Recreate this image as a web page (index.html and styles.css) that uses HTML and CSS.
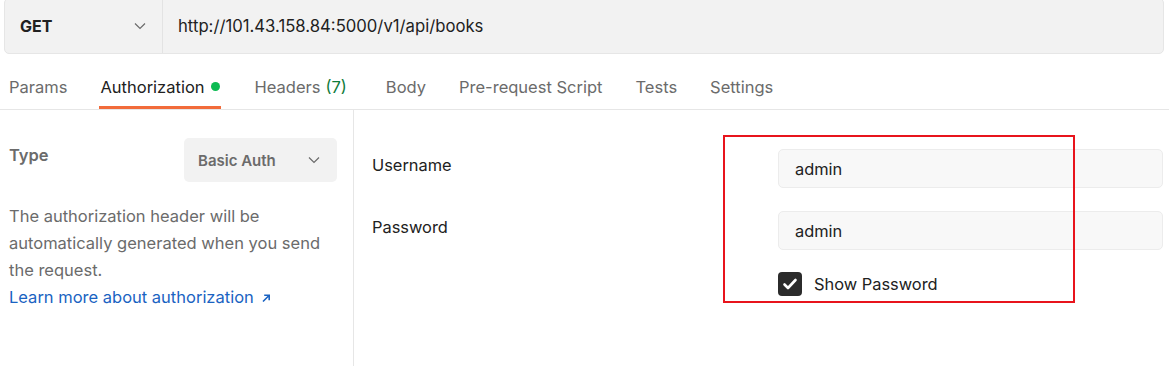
FILE: index.html
```html
<!DOCTYPE html>
<html>
<head>
<meta charset="utf-8">
<link rel="stylesheet" href="styles.css">
</head>
<body>
<div class="page">
  <div class="urlbar">
    <div class="method">
      <span class="method-name">GET</span>
      <svg class="chev" width="12" height="8" viewBox="0 0 12 8"><path d="M1 1.5 L6 6.5 L11 1.5" fill="none" stroke="#6b6b6b" stroke-width="1.2"/></svg>
    </div>
    <div class="url">http://101.43.158.84:5000/v1/api/books</div>
  </div>

  <div class="tabs">
    <div class="tab">Params</div>
    <div class="tab active">Authorization <span class="dot"></span></div>
    <div class="tab wide">Headers <span class="count">(7)</span></div>
    <div class="tab">Body</div>
    <div class="tab">Pre-request Script</div>
    <div class="tab">Tests</div>
    <div class="tab">Settings</div>
  </div>

  <div class="content">
    <div class="left">
      <div class="type-row">
        <span class="type-label">Type</span>
        <div class="select">
          <span>Basic Auth</span>
          <svg class="chev" width="12" height="8" viewBox="0 0 12 8"><path d="M1 1.5 L6 6.5 L11 1.5" fill="none" stroke="#6b6b6b" stroke-width="1.2"/></svg>
        </div>
      </div>
      <p class="desc">The authorization header will be automatically generated when you send the request.<br><a class="learn" href="#">Learn more about authorization <svg class="arrow" width="10" height="10" viewBox="0 0 10 10"><path d="M2 8.5 L8 2.5 M3.2 2.3 H8.2 V7.3" fill="none" stroke="#1a63c2" stroke-width="1.6"/></svg></a></p>
    </div>
    <div class="right">
      <div class="field">
        <span class="label">Username</span>
        <div class="input">admin</div>
      </div>
      <div class="field">
        <span class="label">Password</span>
        <div class="input">admin</div>
      </div>
      <div class="check-row">
        <span class="checkbox"><svg width="16" height="14" viewBox="0 0 16 14"><path d="M2.5 7.5 L6 11 L13.5 3" fill="none" stroke="#fff" stroke-width="2.6" stroke-linecap="round" stroke-linejoin="round"/></svg></span>
        <span class="check-label">Show Password</span>
      </div>
      <div class="highlight"></div>
    </div>
  </div>
</div>
</body>
</html>
```

FILE: styles.css
```css
* { box-sizing: border-box; }
html, body { margin: 0; padding: 0; background: #fff; }
body {
  font-family: Inter, "Noto Sans", "Liberation Sans", sans-serif;
  font-size: 16px;
  color: #212121;
  width: 1169px;
  height: 366px;
  overflow: hidden;
}
.page { position: relative; }

.urlbar {
  display: flex;
  margin: -2px 5px 0 4px;
  height: 56px;
  background: #f2f2f2;
  border: 1px solid #e6e6e6;
  border-radius: 5px;
}
.method {
  width: 158px;
  display: flex;
  align-items: center;
  justify-content: space-between;
  padding: 0 16px 0 15px;
  border-right: 1px solid #e3e3e3;
}
.method-name { font-weight: 700; font-size: 16px; color: #212121; }
.url { display: flex; align-items: center; padding-left: 15px; font-size: 16.7px; color: #212121; }

.tabs {
  display: flex;
  height: 56px;
  border-bottom: 1px solid #e6e6e6;
  padding-left: 9px;
}
.tab {
  display: flex;
  align-items: center;
  margin-right: 33px;
  font-size: 16.5px;
  color: #6b6b6b;
  position: relative;
  padding-top: 10px;
}
.tab.active { color: #212121; margin-right: 35px; }
.tab.wide { margin-right: 39px; }
.tab.active::after {
  content: "";
  position: absolute;
  left: -1px; right: -1px; bottom: 0;
  height: 3px;
  background: #f26b3a;
}
.dot { width: 9px; height: 9px; border-radius: 50%; background: #0cbb52; margin-left: 6px; }
.count { color: #0f7b3a; margin-left: 5px; }

.content { display: flex; height: 256px; }
.left {
  width: 354px;
  border-right: 1px solid #e6e6e6;
  padding: 28px 16px 0 9px;
}
.type-row { display: flex; justify-content: space-between; align-items: flex-start; }
.type-label { font-weight: 600; color: #6b6b6b; font-size: 16.5px; padding-top: 7px; }
.select {
  width: 153px;
  height: 44px;
  background: #f2f2f2;
  border-radius: 5px;
  display: flex;
  align-items: center;
  justify-content: space-between;
  padding: 0 17px 0 14px;
  font-weight: 600;
  font-size: 15px;
  color: #6b6b6b;
}
.desc {
  margin: 21px 0 0 0;
  line-height: 27px;
  color: #6b6b6b;
  font-size: 16.5px;
}
.learn { color: #1a63c2; text-decoration: none; }
.arrow { margin-left: 3px; vertical-align: 0; }

.right { flex: 1; position: relative; padding: 39px 6px 0 18px; }
.field { display: flex; align-items: flex-start; justify-content: space-between; height: 39px; margin-bottom: 23px; }
.label { font-size: 16.4px; color: #212121; padding-top: 6px; }
.input {
  width: 385px;
  height: 39px;
  background: #f8f8f8;
  border: 1px solid #ececec;
  border-radius: 5px;
  display: flex;
  align-items: center;
  padding-left: 16px;
  font-size: 16.4px;
  color: #212121;
}
.check-row { display: flex; align-items: center; margin-left: 406px; margin-top: -1px; }
.checkbox {
  width: 24px; height: 24px;
  background: #2b2b2b;
  border-radius: 4px;
  display: flex; align-items: center; justify-content: center;
}
.check-label { margin-left: 12px; font-size: 16.4px; color: #212121; }

.highlight {
  position: absolute;
  left: 369px;
  top: 25px;
  width: 352px;
  height: 168px;
  border: 2px solid #e8141c;
}
```
